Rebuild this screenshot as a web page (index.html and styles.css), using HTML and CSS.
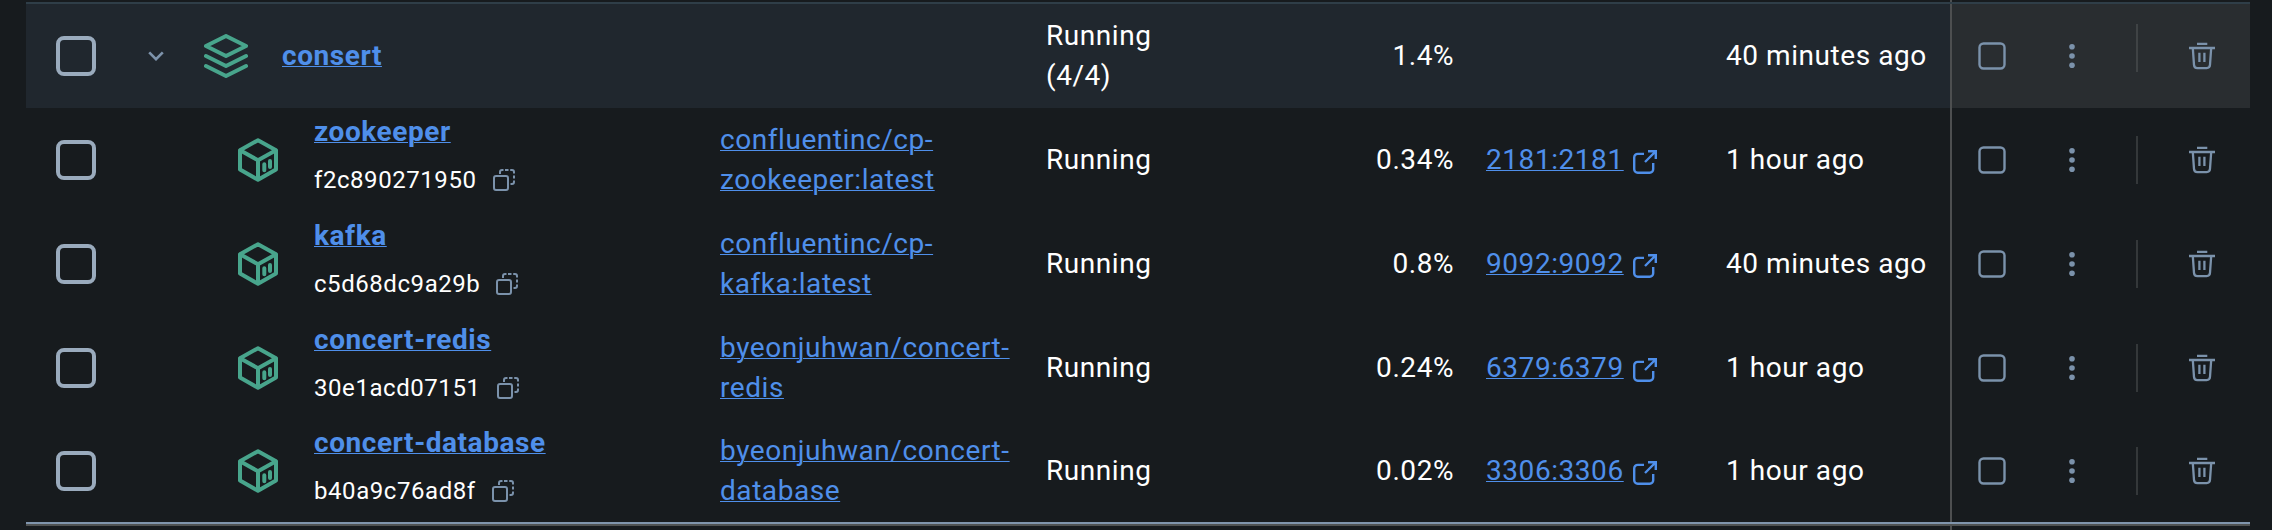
FILE: index.html
```
<!DOCTYPE html>
<html lang="en">
<head>
<meta charset="utf-8">
<title>Containers</title>
<link rel="stylesheet" href="styles.css">
</head>
<body>
<svg class="sprite" aria-hidden="true">
  <symbol id="chevron" viewBox="0 0 16 10"><path d="M1.200 1.400 8 8.200l6.800-6.800" fill="none" stroke="currentColor" stroke-width="2.600"/></symbol>
  <symbol id="stack" viewBox="0 0 44 44"><g fill="none" stroke="currentColor" stroke-width="4" stroke-linecap="round" stroke-linejoin="round"><path d="M22 2 42 12 22 22 2 12Z"/><path d="M2 22l20 10 20-10"/><path d="M2 32l20 10 20-10"/></g></symbol>
  <symbol id="cube" viewBox="0 0 40 44"><g fill="none" stroke="currentColor" stroke-width="4" stroke-linejoin="round" stroke-linecap="round"><path d="M20 2.200 38 12.200V31.500L20 41.800 2 31.500V12.200Z"/><path d="M2.500 12.500 20 22.200l17.500-9.700M20 22.200V41"/><path d="M26.300 26.300v6M32 23v6"/></g></symbol>
  <symbol id="copy" viewBox="0 0 22 22"><g fill="none" stroke="currentColor" stroke-width="2"><rect x="1" y="7" width="14" height="14" rx="2"/><path d="M7 5V3a2 2 0 0 1 2-2h1.500M12 1h3.500M17.200 1h1.800a2 2 0 0 1 2 2v1.500M21 6.500v3M21 11.500v1.500a2 2 0 0 1-2 2h-1.500"/></g></symbol>
  <symbol id="open" viewBox="0 0 24 24"><g fill="none" stroke="currentColor" stroke-width="2.400"><path d="M11 3.900H4.700A3.500 3.500 0 0 0 1.200 7.400v11.900a3.500 3.500 0 0 0 3.500 3.500h12a3.500 3.500 0 0 0 3.500-3.500V13"/><path d="M15 1.200h7.800V9M22.500 1.500 12 12"/></g></symbol>
  <symbol id="stop" viewBox="0 0 28 28"><rect x="1.500" y="1.500" width="25" height="25" rx="4" fill="none" stroke="currentColor" stroke-width="2.400"/></symbol>
  <symbol id="dots" viewBox="0 0 6 26"><g fill="currentColor"><circle cx="3" cy="3.700" r="2.800"/><circle cx="3" cy="13" r="2.800"/><circle cx="3" cy="22.300" r="2.800"/></g></symbol>
  <symbol id="trash" viewBox="0 0 26 28"><g fill="none" stroke="currentColor" stroke-width="2.300"><path d="M8 1.800h10.300M0 6h26"/><path d="M3.800 6l1.200 16.800a3.500 3.500 0 0 0 3.400 3.300h9.200a3.500 3.500 0 0 0 3.400-3.300L22.200 6"/><path d="M10.400 10.700v9.300M15.400 10.700v9.300"/></g></symbol>
</svg>
<main class="table">
  <div class="row group">
    <span class="check"></span>
    <svg class="chevron"><use href="#chevron"/></svg>
    <svg class="stack"><use href="#stack"/></svg>
    <a class="name">consert</a>
    <span class="status">Running<br>(4/4)</span><span class="cpu">1.4%</span><span class="ports"></span><span class="age">40 minutes ago</span>
    <div class="actions"><svg class="stop"><use href="#stop"/></svg><svg class="dots"><use href="#dots"/></svg><i class="sep"></i><svg class="trash"><use href="#trash"/></svg></div>
  </div>
  <div class="row">
    <span class="check"></span>
    <svg class="cube"><use href="#cube"/></svg>
    <div class="ident"><a class="name">zookeeper</a><span class="id">f2c890271950<svg class="copy"><use href="#copy"/></svg></span></div>
    <a class="image">confluentinc/cp-<br>zookeeper:latest</a>
    <span class="status">Running</span><span class="cpu">0.34%</span><span class="ports"><a>2181:2181</a><svg class="open"><use href="#open"/></svg></span><span class="age">1 hour ago</span>
    <div class="actions"><svg class="stop"><use href="#stop"/></svg><svg class="dots"><use href="#dots"/></svg><i class="sep"></i><svg class="trash"><use href="#trash"/></svg></div>
  </div>
  <div class="row">
    <span class="check"></span>
    <svg class="cube"><use href="#cube"/></svg>
    <div class="ident"><a class="name">kafka</a><span class="id">c5d68dc9a29b<svg class="copy"><use href="#copy"/></svg></span></div>
    <a class="image">confluentinc/cp-<br>kafka:latest</a>
    <span class="status">Running</span><span class="cpu">0.8%</span><span class="ports"><a>9092:9092</a><svg class="open"><use href="#open"/></svg></span><span class="age">40 minutes ago</span>
    <div class="actions"><svg class="stop"><use href="#stop"/></svg><svg class="dots"><use href="#dots"/></svg><i class="sep"></i><svg class="trash"><use href="#trash"/></svg></div>
  </div>
  <div class="row">
    <span class="check"></span>
    <svg class="cube"><use href="#cube"/></svg>
    <div class="ident"><a class="name">concert-redis</a><span class="id">30e1acd07151<svg class="copy"><use href="#copy"/></svg></span></div>
    <a class="image">byeonjuhwan/concert-<br>redis</a>
    <span class="status">Running</span><span class="cpu">0.24%</span><span class="ports"><a>6379:6379</a><svg class="open"><use href="#open"/></svg></span><span class="age">1 hour ago</span>
    <div class="actions"><svg class="stop"><use href="#stop"/></svg><svg class="dots"><use href="#dots"/></svg><i class="sep"></i><svg class="trash"><use href="#trash"/></svg></div>
  </div>
  <div class="row last">
    <span class="check"></span>
    <svg class="cube"><use href="#cube"/></svg>
    <div class="ident"><a class="name">concert-database</a><span class="id">b40a9c76ad8f<svg class="copy"><use href="#copy"/></svg></span></div>
    <a class="image">byeonjuhwan/concert-<br>database</a>
    <span class="status">Running</span><span class="cpu">0.02%</span><span class="ports"><a>3306:3306</a><svg class="open"><use href="#open"/></svg></span><span class="age">1 hour ago</span>
    <div class="actions"><svg class="stop"><use href="#stop"/></svg><svg class="dots"><use href="#dots"/></svg><i class="sep"></i><svg class="trash"><use href="#trash"/></svg></div>
  </div>
  <div class="tail"></div>
</main>
</body>
</html>
```
FILE: styles.css
```
* { box-sizing: border-box; }
body {
  margin: 0;
  height: 530px;
  overflow: hidden;
  background: #171b1e;
  color: #fff;
  font: 400 28px/40px Roboto, sans-serif;
  letter-spacing: 0.02em;
}
svg { display: block; }
.sprite { position: absolute; width: 0; height: 0; }
.table {
  width: 2224px;
  height: 530px;
  margin-left: 26px;
  padding-top: 2px;
  background: linear-gradient(#4d4f50, #4d4f50) 1924px 0 / 2px 100% no-repeat;
}
.row {
  display: grid;
  grid-template-columns: 30px 92px 56px 110px 406px 326px 240px 168px 32px 240px 224px 300px;
  align-items: center;
  height: 104px;
}
.group {
  height: 106px;
  border-top: 2px solid #2f3e48;
  background: linear-gradient(90deg, #20272e 1924px, #4d4f50 1924px 1926px, #292d30 1926px);
}
.last { height: 102px; }
.tail {
  height: 4px;
  background: linear-gradient(#8095ad 50%, #4f5252 50%);
}
.check {
  grid-column: 2;
  width: 40px;
  height: 40px;
  border: 4px solid #9aabbd;
  border-radius: 8px;
}
.chevron { grid-column: 3; width: 16px; height: 10px; color: #7d93ab; }
.stack { grid-column: 4; width: 44px; height: 44px; }
.cube { grid-column: 4; width: 40px; height: 44px; margin-left: 34px; }
.stack, .cube { color: #48a58c; }
.group .name { grid-column: 5; justify-self: start; margin-left: -32px; }
.ident { grid-column: 5; display: grid; gap: 8px; justify-items: start; margin-bottom: 8px; }
a {
  color: #4f8fea;
  text-decoration: underline 1px;
  text-underline-offset: 1px;
}
.name { font-weight: 700; }
.id { display: flex; align-items: center; gap: 16px; font-size: 24px; }
.copy { width: 22px; height: 22px; color: #7b92ab; }
.image { grid-column: 6; }
.status { grid-column: 7; }
.cpu { grid-column: 8; justify-self: end; }
.ports { grid-column: 10; display: flex; align-items: center; gap: 9px; }
.open { width: 24px; height: 24px; margin-top: 4px; color: #4f8fea; }
.age { grid-column: 11; }
.actions { grid-column: 12; display: flex; align-items: center; height: 100%; padding-left: 28px; color: #7b92ab; }
.stop { width: 28px; height: 28px; }
.dots { width: 6px; height: 26px; margin-left: 63px; }
.sep { width: 2px; height: 48px; margin-left: 61px; background: #34383a; }
.group .sep { margin-bottom: 16px; background: #3f4345; }
.trash { width: 26px; height: 28px; margin-left: 51px; }
```
